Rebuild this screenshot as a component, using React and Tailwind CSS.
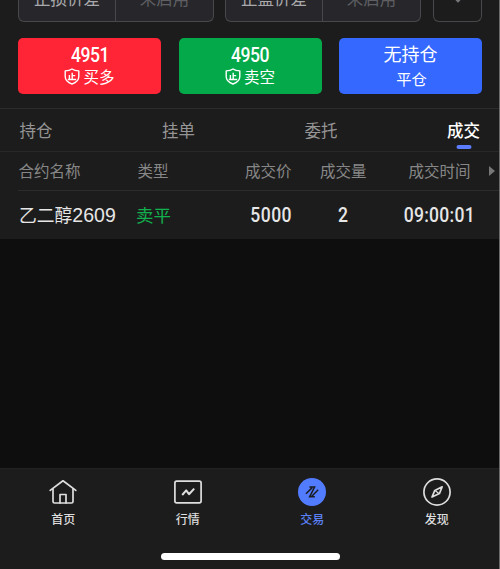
import React from "react";

const ShieldIcon = () => (
  <svg width="16" height="17" viewBox="0 0 16 17" fill="none" stroke="currentColor" strokeWidth="1.4">
    <path d="M8 1 C6 2.4 4 2.8 1.2 2.9 V8.5 C1.2 12 3.8 14.6 8 16 C12.2 14.6 14.8 12 14.8 8.5 V2.9 C12 2.8 10 2.4 8 1 Z" strokeLinejoin="round" />
    <path d="M8.2 4.8 V11.4 M8.2 7.6 H11.2 M5.4 7 V11.4 M3.8 11.5 H12.2" />
  </svg>
);

const HomeIcon = () => (
  <svg width="28" height="28" viewBox="0 0 28 28" fill="none" stroke="currentColor" strokeWidth="1.7" strokeLinecap="round" strokeLinejoin="round">
    <path d="M1.2 12.4 L14 2.8 L26.8 12.4" />
    <path d="M4 11 V23.5 Q4 25 5.5 25 H22.5 Q24 25 24 23.5 V11" />
    <path d="M11 25 V16.5 H17 V25" />
  </svg>
);

const QuoteIcon = () => (
  <svg width="28" height="28" viewBox="0 0 28 28" fill="none" stroke="currentColor" strokeWidth="1.7" strokeLinejoin="round">
    <rect x="0.9" y="3.2" width="26.2" height="21.6" rx="1.8" />
    <path d="M8.2 17 L12.2 12.4 L15 16.2 L20.2 10.6" strokeWidth="2" />
  </svg>
);

const TradeIcon = () => (
  <svg width="28" height="28" viewBox="0 0 28 28" fill="none">
    <circle cx="14" cy="14" r="14" fill="#527cff" />
    <path d="M8 15.8 L14.2 9.6 M11.4 9 H16.6 L11.6 18.8 H16.8 M13.8 18.2 L20.2 11.8" stroke="#1b1c22" strokeWidth="1.5" />
  </svg>
);

const CompassIcon = () => (
  <svg width="28" height="28" viewBox="0 0 28 28" fill="none" stroke="currentColor" strokeWidth="1.7" strokeLinejoin="round">
    <circle cx="14" cy="14" r="13.1" />
    <path d="M19.2 8.8 L16.4 15.6 L9 19 L11.8 12.4 Z" />
    <path d="M12.2 12.6 L15.8 15.6" strokeWidth="1.3" />
  </svg>
);

const navItems = [
  { label: "首页", Icon: HomeIcon },
  { label: "行情", Icon: QuoteIcon },
  { label: "交易", Icon: TradeIcon, active: true },
  { label: "发现", Icon: CompassIcon },
];

/* tall narrow digits used for prices and times */
const Digits = ({ children, className }) => (
  <span className={`inline-block scale-x-90 font-['Roboto'] text-[19.5px] font-medium ${className}`}>{children}</span>
);

const PriceField = ({ label, className }) => (
  <div className={`flex h-full overflow-hidden rounded-b-md border border-t-0 border-[#48484c] bg-[#27272b] text-[16.5px] leading-[24px] ${className}`}>
    <div className="flex w-1/2 items-end justify-center border-r border-[#48484c] pb-[11px] text-[#a9a9ab]">{label}</div>
    <div className="flex w-1/2 items-end justify-center pb-[11px] text-[#5f5f63]">未启用</div>
  </div>
);

const OrderButton = ({ price, label, className }) => (
  <button className={`flex h-14 flex-col items-center rounded-[5px] pt-[7px] text-white ${className}`}>
    <Digits className="leading-[21px] tracking-[-0.6px]">{price}</Digits>
    <span className="flex items-center gap-[3px] text-[15.5px] leading-[21px]">
      <ShieldIcon />
      {label}
    </span>
  </button>
);

const App = () => {
  return (
    <div className="flex h-[569px] w-[500px] flex-col overflow-hidden border-r border-[#6a6a6a] bg-[#1c1c1c] font-['Noto_Sans_CJK_SC',sans-serif] text-[#e6e6e6]">
      {/* STOP LOSS / TAKE PROFIT */}
      <div className="flex h-[22px] shrink-0 px-[18px]">
        <PriceField label="止损价差" className="w-[196px] shrink-0" />
        <PriceField label="止盈价差" className="ml-[11px] w-[196px] shrink-0" />
        <div className="ml-[12px] flex h-full w-[49px] shrink-0 justify-center rounded-b-md border border-t-0 border-[#48484c]">
          <svg width="10" height="4" viewBox="0 0 10 4">
            <path d="M1 -2.6 L5 1.4 L9 -2.6" fill="none" stroke="#77777b" strokeWidth="1.8" />
          </svg>
        </div>
      </div>

      {/* ORDER BUTTONS */}
      <div className="mt-4 grid shrink-0 grid-cols-3 gap-[17.5px] pl-[18px] pr-[17px]">
        <OrderButton price="4951" label="买多" className="bg-[#ff2436]" />
        <OrderButton price="4950" label="卖空" className="bg-[#04aa4a]" />
        <button className="flex h-14 flex-col items-center rounded-[5px] bg-[#3468ff] pt-[3px] text-white">
          <span className="text-[18px] leading-[25px]">无持仓</span>
          <span className="pl-[2px] text-[15.3px] leading-[24px]">平仓</span>
        </button>
      </div>

      {/* TABS */}
      <div className="mt-[14px] flex h-[43px] shrink-0 justify-between border-t border-[#2c2c2c] pl-[19.5px] pr-[19px] text-[16.5px] leading-[42px] text-[#959595]">
        <span>持仓</span>
        <span>挂单</span>
        <span>委托</span>
        <span className="relative font-medium text-white">
          成交
          <i className="absolute bottom-[2px] left-1/2 h-1 w-[15px] -translate-x-1/2 rounded-full bg-[#5b7cff]" />
        </span>
      </div>

      {/* TRADE TABLE */}
      <div className="flex h-[39px] shrink-0 border-t border-[#282828] pl-[18.5px] text-[15.5px] leading-[37px] text-[#878787]">
        <span className="w-[119px]">合约名称</span>
        <span className="w-[60px]">类型</span>
        <span className="w-[94px] text-right">成交价</span>
        <span className="w-[75px] text-right">成交量</span>
        <span className="w-[104px] text-right">成交时间</span>
        <i className="ml-[18px] mt-[14px] h-0 w-0 border-y-[5px] border-l-[6px] border-y-transparent border-l-[#777]" />
      </div>
      <div className="ml-[18px] flex h-[49px] shrink-0 border-t border-[#2c2c2c] pl-px leading-[47px]">
        <span className="w-[117px] whitespace-nowrap text-[17.8px]">
          乙二醇<span className="font-['Liberation_Sans'] text-[19.5px]">2609</span>
        </span>
        <span className="w-[60px] text-[17.5px] text-[#12b04f]">卖平</span>
        <Digits className="w-[96px] origin-right text-right tracking-[0.5px] leading-[49px]">5000</Digits>
        <Digits className="w-[56px] origin-right text-right leading-[49px]">2</Digits>
        <Digits className="w-[127px] origin-right text-right tracking-[0.3px] leading-[49px]">09:00:01</Digits>
      </div>
      <div className="flex-1 bg-[#0e0e0e]" />

      {/* BOTTOM NAV */}
      <nav className="flex h-[101px] shrink-0 flex-col items-center border-t border-[#222] pl-px">
        <div className="grid w-full grid-cols-4">
          {navItems.map(({ label, Icon, active }) => (
            <div key={label} className={`flex flex-col items-center pt-[9px] ${active ? "text-[#5b80f5]" : "text-[#dedede]"}`}>
              <Icon />
              <span className="mt-[4px] text-[12px] font-medium leading-[18px]">{label}</span>
            </div>
          ))}
        </div>
        <div className="mt-[25px] h-[7px] w-[179px] rounded-full bg-white" />
      </nav>
    </div>
  );
};

export default App;
